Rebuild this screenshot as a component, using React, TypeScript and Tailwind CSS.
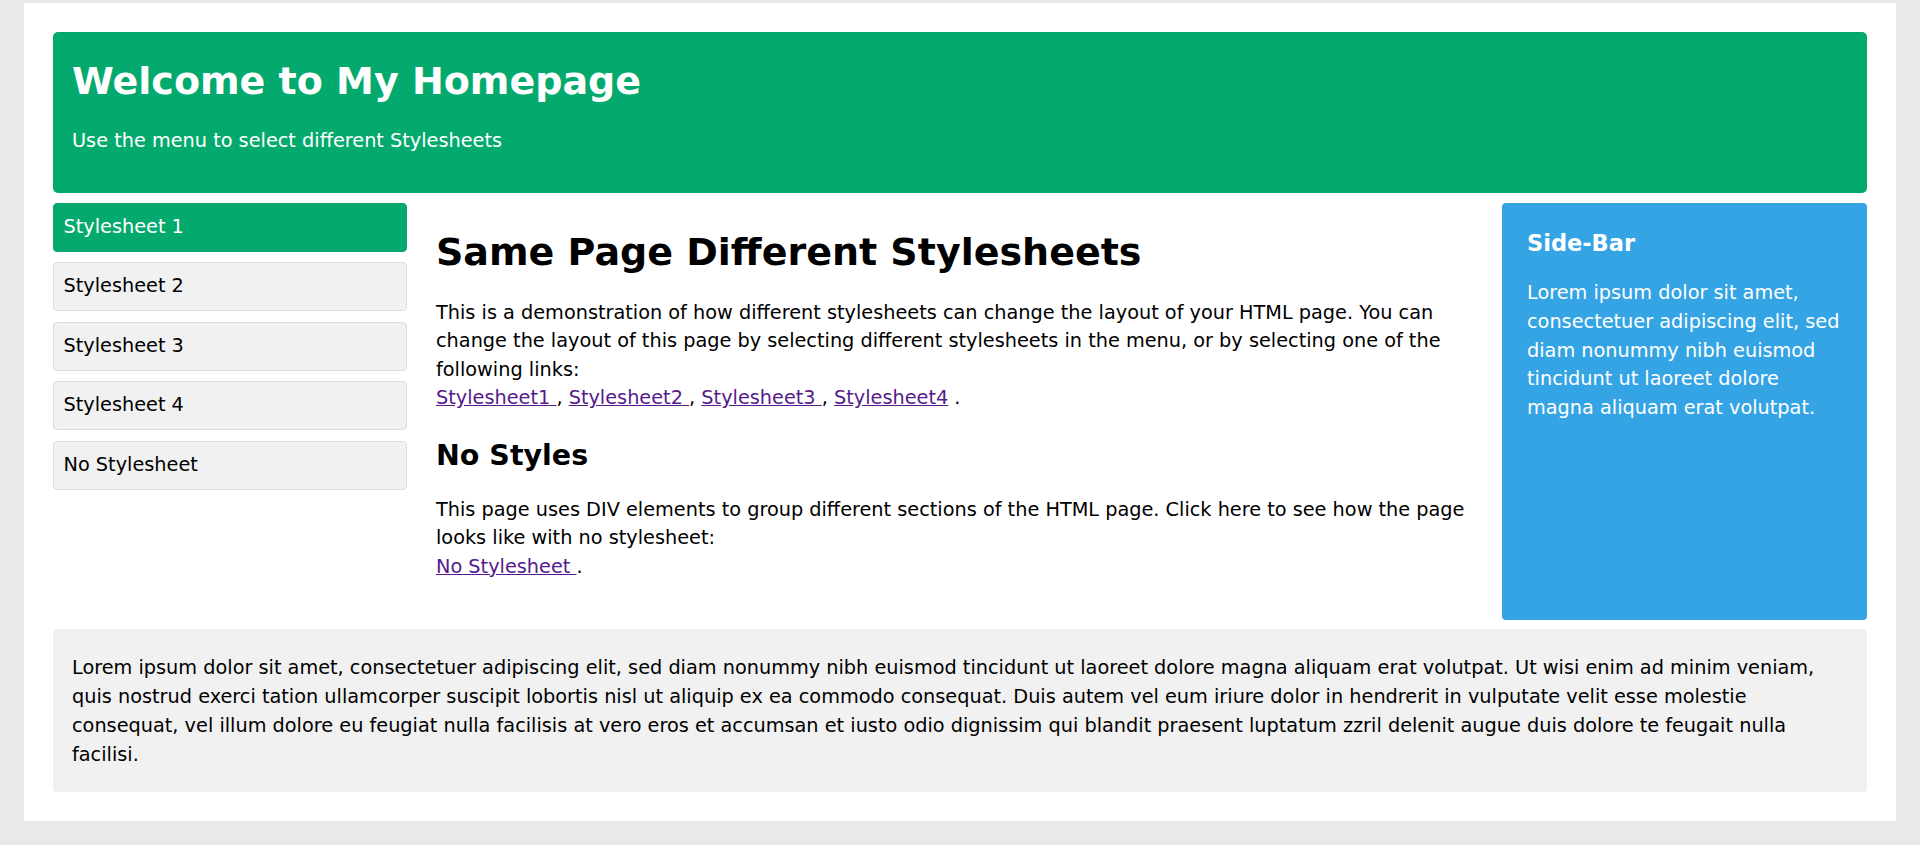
const navItems = ["Stylesheet 1", "Stylesheet 2", "Stylesheet 3", "Stylesheet 4", "No Stylesheet"]

const linkClass = "text-[#551a8b] underline"

export default function App() {
  return (
    <div className="min-h-[845px] bg-[#e7e9eb] pt-[3px] font-['DejaVu_Sans',Verdana,sans-serif] text-[19.3px] leading-[28.6px] text-black">
      <div className="mx-[24px] bg-white p-[29px]">
        {/* header */}
        <div className="rounded-[5px] bg-[#04aa6d] px-[19px] pt-[20.5px] pb-[37px] text-white">
          <h1 className="text-[38px] font-bold leading-[57px]">Welcome to My Homepage</h1>
          <p className="mt-[17.5px]">Use the menu to select different Stylesheets</p>
        </div>

        <div className="mt-[10px] flex items-start">
          {/* menu */}
          <div className="flex w-[354px] flex-col gap-[10.5px]">
            {navItems.map((item, i) => (
              <a
                key={item}
                href="#"
                className={`flex h-[49px] items-center rounded-[4px] border pl-[9.5px] ${
                  i === 0
                    ? "border-[#0ba36c] bg-[#04aa6d] text-white"
                    : "border-[#dcdcdc] bg-[#f1f1f1] text-black"
                }`}
              >
                {item}
              </a>
            ))}
          </div>

          {/* main */}
          <div className="flex-1 pl-[29px] pr-[24px]">
            <h1 className="mt-[21px] text-[38px] font-bold leading-[57px]">Same Page Different Stylesheets</h1>
            <p className="mt-[18px]">
              This is a demonstration of how different stylesheets can change the layout of your HTML page. You can
              change the layout of this page by selecting different stylesheets in the menu, or by selecting one of
              the following links:
              <br />
              <a href="#" className={linkClass}>Stylesheet1 </a>, <a href="#" className={linkClass}>Stylesheet2 </a>,{" "}
              <a href="#" className={linkClass}>Stylesheet3 </a>, <a href="#" className={linkClass}>Stylesheet4</a> .
            </p>
            <h2 className="mt-[22px] text-[28.5px] font-bold leading-[42.75px]">No Styles</h2>
            <p className="mt-[18px]">
              This page uses DIV elements to group different sections of the HTML page. Click here to see how the page
              looks like with no stylesheet:
              <br />
              <a href="#" className={linkClass}>No Stylesheet </a>.
            </p>
          </div>

          {/* side bar */}
          <div className="h-[417px] w-[365px] rounded-[4px] bg-[#35a4e5] px-[25px] pt-[24px] text-white">
            <h3 className="text-[22.5px] font-bold leading-[33.75px]">Side-Bar</h3>
            <p className="mt-[19px]">
              Lorem ipsum dolor sit amet, consectetuer adipiscing elit, sed diam nonummy nibh euismod tincidunt ut
              laoreet dolore magna aliquam erat volutpat.
            </p>
          </div>
        </div>

        {/* footer */}
        <div className="mt-[9.5px] rounded-[4px] bg-[#f1f1f1] px-[19px] py-[23.5px]">
          <p className="leading-[29px]">
            Lorem ipsum dolor sit amet, consectetuer adipiscing elit, sed diam nonummy nibh euismod tincidunt ut
            laoreet dolore magna aliquam erat volutpat. Ut wisi enim ad minim veniam, quis nostrud exerci tation
            ullamcorper suscipit lobortis nisl ut aliquip ex ea commodo consequat. Duis autem vel eum iriure dolor in
            hendrerit in vulputate velit esse molestie consequat, vel illum dolore eu feugiat nulla facilisis at vero
            eros et accumsan et iusto odio dignissim qui blandit praesent luptatum zzril delenit augue duis dolore te
            feugait nulla facilisi.
          </p>
        </div>
      </div>
    </div>
  )
}
